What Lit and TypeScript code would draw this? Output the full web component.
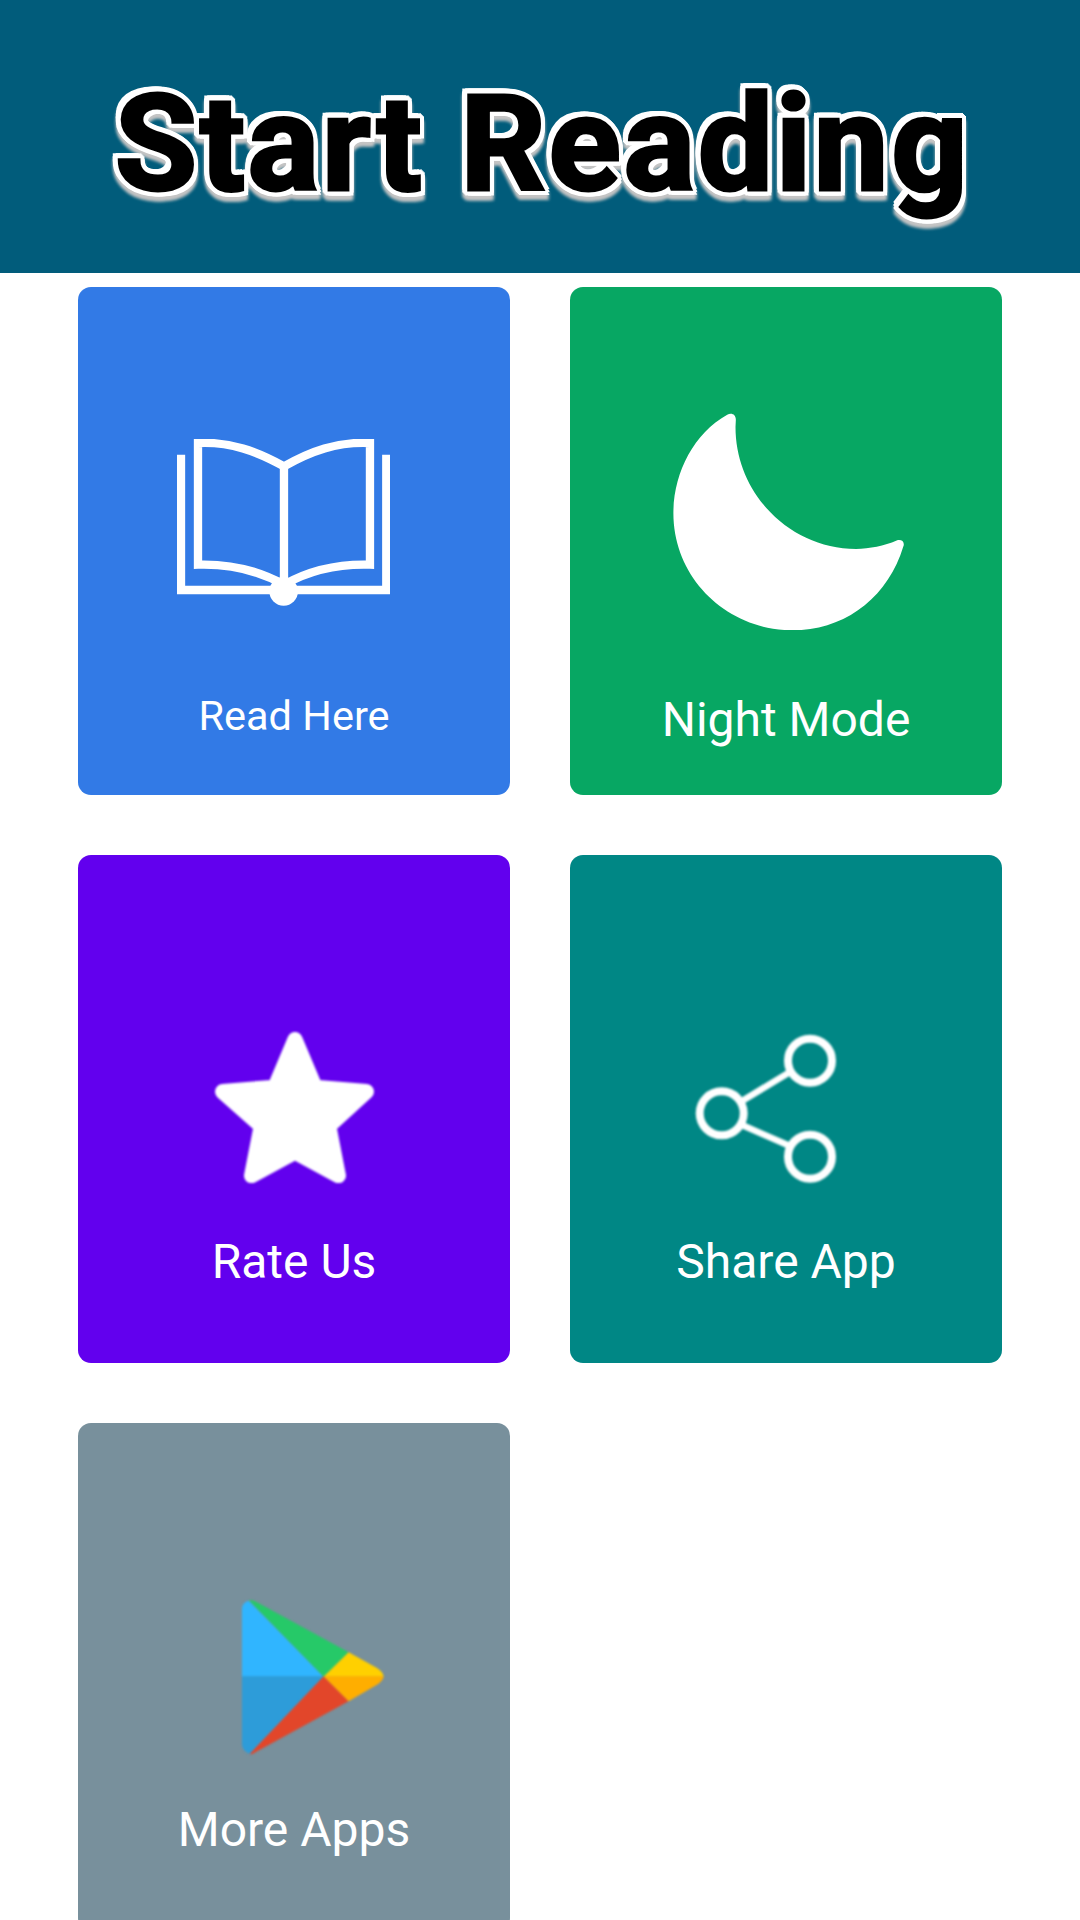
import { LitElement, html, css } from "lit";
import { customElement } from "lit/decorators.js";

@customElement("app-root")
export class AppRoot extends LitElement {
  static styles = css`
    :host { display: block; width: 1080px; height: 1920px; overflow: hidden; background: #fff; font-family: Roboto, "Liberation Sans", sans-serif; }
    .header { height: 273px; background: #015c7b; display: flex; justify-content: center; align-items: flex-start; }
    .title {
      margin: 67px 0 0 5px; font-size: 134px; line-height: 155px; font-weight: 700; letter-spacing: 2.5px; color: #000; white-space: nowrap;
      -webkit-text-stroke: 3px #000;
      filter: drop-shadow(3px 0 0 #fff) drop-shadow(-3px 0 0 #fff) drop-shadow(0 3px 0 #fff) drop-shadow(0 -3px 0 #fff) drop-shadow(1.5px 1.5px 0 #fff) drop-shadow(-1.5px -1.5px 0 #fff) drop-shadow(0 5px 1.5px #c4c4c4);
    }
    .grid { display: grid; grid-template-columns: 432px 432px; grid-auto-rows: 508px; gap: 60px; padding: 14px 78px 0; }
    .card { border-radius: 13px; color: #fff; display: flex; flex-direction: column; align-items: flex-start; overflow: hidden; }
    .card svg { display: block; flex: none; }
    .label { align-self: stretch; text-align: center; font-size: 48px; line-height: 52px; }
    .read { background: #327ae6; }
    .read svg { margin: 152px 0 0 99px; width: 213.3px; height: 166.7px; }
    .read .label { font-size: 41.5px; line-height: 48px; margin-top: 86px; }
    .night { background: #07a763; }
    .night svg { margin: 126px 0 0 103px; width: 231.7px; height: 217.3px; }
    .night .label { margin-top: 64px; }
    .rate { background: #6200ee; }
    .rate svg { margin: 177px 0 0 137px; width: 159px; height: 151.3px; filter: blur(0.8px); }
    .rate .label { margin-top: 53px; }
    .share { background: #008785; }
    .share svg { margin: 179px 0 0 125px; width: 141px; height: 149px; filter: blur(0.8px); }
    .share .label { margin-top: 53px; }
    .more { background: #78909c; }
    .more svg { margin: 176px 0 0 164px; width: 143.3px; height: 156.7px; filter: blur(0.8px); }
    .more .label { margin-top: 48px; }
  `;

  render() {
    return html`
      <div class="header"><h1 class="title">Start Reading</h1></div>
      <div class="grid">
        <div class="card read">
          <svg viewBox="80 88 640 500" fill="none" stroke="#fff" stroke-width="25">
            <path d="M92 135V541H708V135" />
            <path d="M143 100C240 95 320 125 401 170C480 125 560 95 659 100V465C560 462 480 480 401 525C320 480 240 462 143 465Z" />
            <path d="M401 170V530" />
            <circle cx="400" cy="545" r="43" fill="#fff" stroke="none" />
          </svg>
          <div class="label">Read Here</div>
        </div>
        <div class="card night">
          <svg viewBox="70 68 695 654">
            <path fill="#fff" d="M232 73C130 130 70 250 70 370C70 565 230 722 430 722C585 722 715 625 762 470C768 455 755 447 742 452C705 468 660 477 620 477C420 477 257 310 257 110L258 88C258 72 245 66 232 73Z" />
          </svg>
          <div class="label">Night Mode</div>
        </div>
        <div class="card rate">
          <svg viewBox="75 68 477 454">
            <path fill="#fff" stroke="#fff" stroke-width="46" stroke-linejoin="round" d="M315 91L255 234L98 247L214 350L185 499L315 428L445 499L416 350L529 247L375 234Z" />
          </svg>
          <div class="label">Rate Us</div>
        </div>
        <div class="card share">
          <svg viewBox="695 1034 141 149" fill="none" stroke="#fff" stroke-width="8">
            <circle cx="810" cy="1060.7" r="22" />
            <circle cx="721.7" cy="1113.3" r="22" />
            <circle cx="810" cy="1156.7" r="22" />
            <path stroke-width="6.5" d="M742 1101L790 1072M742 1125L790 1146" />
          </svg>
          <div class="label">Share App</div>
        </div>
        <div class="card more">
          <svg viewBox="65 55 430 470">
            <path fill="#30b5ff" d="M65 288V85Q65 65 85 60L310 288Z" />
            <path fill="#2d9cd9" d="M65 287H310L88 520Q65 510 65 490Z" />
            <path fill="#26c968" d="M85 58Q95 56 110 65L385 215L310 288Z" />
            <path fill="#e2462a" d="M310 287L385 362L105 515Q95 523 88 520Z" />
            <path fill="#ffd000" d="M310 288L385 215L470 262Q490 275 490 288Z" />
            <path fill="#ffae00" d="M310 287H490Q490 300 470 312L385 362Z" />
          </svg>
          <div class="label">More Apps</div>
        </div>
      </div>
    `;
  }
}
